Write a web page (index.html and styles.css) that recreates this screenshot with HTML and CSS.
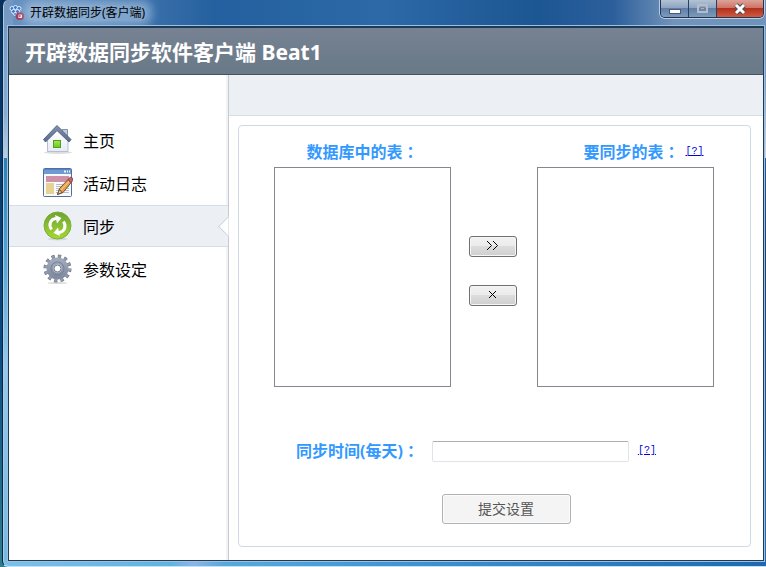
FILE: index.html
```html
<!DOCTYPE html>
<html lang="zh-CN">
<head>
    <meta charset="UTF-8">
    <meta name="viewport" content="width=device-width, initial-scale=1.0">
    <title>开辟数据同步(客户端)</title>
    <link rel="stylesheet" href="styles.css">
</head>
<body>

<div class="window">
    <!-- Title bar -->
    <div class="titlebar">
        <svg class="app-icon" width="16" height="16" viewBox="0 0 16 16">
            <g fill="#3d78c4" stroke="#dcecff" stroke-width="1">
                <circle cx="3" cy="3.500" r="2"/>
                <circle cx="6.500" cy="2.500" r="2"/>
                <circle cx="10" cy="3.500" r="2"/>
                <circle cx="4.500" cy="6.500" r="2"/>
                <circle cx="8.500" cy="6.500" r="2"/>
                <circle cx="6" cy="9" r="1.500"/>
            </g>
            <rect x="8" y="8.500" width="6" height="5.500" rx="2" fill="#fff" stroke="#a03a5c" stroke-width="2"/>
            <path d="M6 11h5M10 9.500l1.500 1.500-1.500 1.500" fill="none" stroke="#a03a5c"/>
        </svg>
        <span class="caption">开辟数据同步(客户端)</span>
        <div class="window-buttons">
            <button type="button" class="win-btn" aria-label="最小化">
                <svg width="13" height="12" viewBox="0 0 13 12"><rect x="1.500" y="6.500" width="11" height="4" fill="#fff" stroke="#4a5a78"/></svg>
            </button>
            <button type="button" class="win-btn" aria-label="最大化" disabled>
                <svg width="13" height="12" viewBox="0 0 13 12"><rect x="2" y="2" width="9" height="7" fill="none" stroke="#b4bdc9" stroke-width="2"/><rect x="4.500" y="4.500" width="4" height="2" fill="#a4b2c4" stroke="#76869d"/></svg>
            </button>
            <button type="button" class="win-btn close" aria-label="关闭">
                <svg width="14" height="12" viewBox="0 0 14 12"><path d="M3 2l8 8M11 2l-8 8" stroke="#4c4a5e" stroke-width="5"/><path d="M3 2l8 8M11 2l-8 8" stroke="#fff" stroke-width="3"/></svg>
            </button>
        </div>
    </div>

    <div class="client">
        <header class="banner">
            <h1>开辟数据同步软件客户端 Beat1</h1>
        </header>

        <div class="content">
            <!-- Side menu -->
            <nav class="sidebar">
                <a href="#home">
                    <svg width="30" height="30" viewBox="0 0 30 30">
                        <defs>
                            <linearGradient id="wall" x1="0" y1="0" x2="0" y2="1"><stop offset="0" stop-color="#fff"/><stop offset="1" stop-color="#e6ebf4"/></linearGradient>
                            <linearGradient id="roof" x1="0" y1="0" x2="0" y2="1"><stop offset="0" stop-color="#8492ad"/><stop offset="1" stop-color="#5a6a88"/></linearGradient>
                            <linearGradient id="door" x1="0" y1="0" x2="0" y2="1"><stop offset="0" stop-color="#a6e84c"/><stop offset="1" stop-color="#5fcf12"/></linearGradient>
                        </defs>
                        <ellipse cx="15" cy="27.500" rx="14" ry="1.500" fill="#ddd"/>
                        <path d="M19 4.500h5.500v8.500l-5.500-4z" fill="#c3ccdb" stroke="#8292b0"/>
                        <path d="M4.500 26.500V15L14.500 5l10.500 10v11.500z" fill="url(#wall)" stroke="#b4bfd2"/>
                        <path d="M.5 14.500L14 .5l14 14-2 2.500L14 5.500 2.500 17z" fill="url(#roof)" stroke="#53648a" stroke-linejoin="round"/>
                        <rect x="10.500" y="15.500" width="7" height="7" fill="url(#door)" stroke="#559a2a"/>
                    </svg>
                    <span>主页</span>
                </a>
                <a href="#log">
                    <svg width="30" height="30" viewBox="0 0 30 30">
                        <rect x=".5" y=".5" width="28" height="28" rx="1" fill="#f8fafd" stroke="#4f6f9f"/>
                        <rect x="1" y="1" width="27" height="5" fill="#6f9ad6"/>
                        <path d="M1 1.500h27" stroke="#5a82c0"/>
                        <path d="M21 3.500h2M24 3.500h1M26 3.500h1" stroke="#e8f1ff" stroke-width="2"/>
                        <rect x="3" y="8" width="23" height="6" fill="#cf91a8"/>
                        <rect x="3" y="15" width="8" height="11" fill="#e8d293"/>
                        <path d="M13 16.500h13M13 18.500h13M13 20.500h13M13 22.500h13M13 24.500h13" stroke="#b7bec9"/>
                        <path d="M14.500 26.500l2-6L26 10.500l3 3-9 11z" fill="#e5a04c" stroke="#80522c"/>
                        <path d="M18 22L27.500 12" stroke="#ffd596"/>
                        <path d="M25 11.500l2.500-2.500q2.500 0 2 3.500l-2 2z" fill="#c9616f" stroke="#8c4b50"/>
                        <path d="M14.500 26.500l2-5 2.500 3z" fill="#f5ddb6" stroke="#6a4a32"/>
                    </svg>
                    <span>活动日志</span>
                </a>
                <a href="#sync" class="active">
                    <svg width="30" height="30" viewBox="0 0 30 30">
                        <defs><linearGradient id="ball" x1="0" y1="0" x2="0" y2="1"><stop offset="0" stop-color="#6ea336"/><stop offset="1" stop-color="#a3d832"/></linearGradient></defs>
                        <ellipse cx="14.500" cy="28" rx="10" ry="1.500" fill="#d5d8dc"/>
                        <circle cx="14.500" cy="14.500" r="13.500" fill="url(#ball)" stroke="#7fae38"/>
                        <path d="M8.500 18.500C5 13 8 8 13 7.500" fill="none" stroke="#fff" stroke-width="3"/>
                        <path d="M12 4l6.500 3-4.500 5.500z" fill="#fff"/>
                        <path d="M20.500 10.500C24 16 21 21 16 21.500" fill="none" stroke="#fff" stroke-width="3"/>
                        <path d="M17 25l-6.500-3 4.500-5.500z" fill="#fff"/>
                    </svg>
                    <span>同步</span>
                </a>
                <a href="#settings">
                    <svg width="30" height="30" viewBox="0 0 30 30">
                        <defs>
                            <linearGradient id="gear" x1="0" y1="0" x2="0" y2="1"><stop offset="0" stop-color="#a0a9ba"/><stop offset="1" stop-color="#828c9f"/></linearGradient>
                        </defs>
                        <ellipse cx="14.500" cy="29" rx="10" ry="1" fill="#ddd"/>
                        <circle cx="14.500" cy="14.500" r="12" fill="none" stroke="#6c768a" stroke-width="4" stroke-dasharray="3.200 3.083"/>
                        <circle cx="14.500" cy="14.500" r="7.500" fill="none" stroke="url(#gear)" stroke-width="7"/>
                        <circle cx="14.500" cy="14.500" r="12" fill="none" stroke="#929cae" stroke-width="3" stroke-dasharray="2.200 4.083" stroke-dashoffset="-0.500"/>
                        <circle cx="14.500" cy="14.500" r="6.500" fill="none" stroke="#76819a"/>
                        <circle cx="14.500" cy="14.500" r="3.500" fill="#fff" stroke="#68758f"/>
                    </svg>
                    <span>参数设定</span>
                </a>
            </nav>

            <main class="main">
                <div class="toolbar"></div>
                <form class="panel">
                    <div class="tables">
                        <div class="table-list">
                            <div class="heading"><label for="sourceTables">数据库中的表<span class="colon" lang="zh-Hant">：</span></label></div>
                            <select id="sourceTables" size="10" multiple></select>
                        </div>
                        <div class="move-buttons">
                            <button type="button" class="small-btn" aria-label="添加">
                                <svg width="11" height="9" viewBox="0 0 11 9"><path d="M0 0l4.500 4.500L0 9M6 0l4.500 4.500L6 9"/></svg>
                            </button>
                            <button type="button" class="small-btn" aria-label="移除">
                                <svg width="7" height="7" viewBox="0 0 7 7"><path d="M0 0l7 7M7 0L0 7"/></svg>
                            </button>
                        </div>
                        <div class="table-list">
                            <div class="heading with-help"><label for="syncTables">要同步的表<span class="colon" lang="zh-Hant">：</span></label><a class="help" href="#help-tables">[?]</a></div>
                            <select id="syncTables" size="10" multiple></select>
                        </div>
                    </div>

                    <div class="time-row">
                        <label for="syncTime">同步时间(每天)<span class="colon" lang="zh-Hant">：</span></label>
                        <input type="text" id="syncTime">
                        <a class="help" href="#help-time">[?]</a>
                    </div>

                    <button type="button" class="submit">提交设置</button>
                </form>
            </main>
        </div>
    </div>
</div>

</body>
</html>
```

FILE: styles.css
```css
* { box-sizing: border-box; }
body { margin: 0; height: 100vh; padding-left: 2px; background: linear-gradient(#08305c, #0b4a80 60%, #2d7f8c); font-family: "Noto Sans", "Noto Sans CJK SC", sans-serif; color: #000; }
button, input, select { font-family: inherit; margin: 0; }

/* Window frame: bottom edge, left edge, right edge, then the title bar glass */
.window {
    height: 100%; display: flex; flex-direction: column; padding: 0 2px 5px 5px;
    border-left: 1px solid #0c2745; border-bottom: 1px solid #bfe4f8; border-radius: 6px 0 0 6px; box-shadow: inset 1px 0 #a9cdea;
    background:
        linear-gradient(90deg, #7cc0e8, #62b2de 22%, #8fb4e4 25%, #57a9dc 29%, #3b8ccc 60%, #1f68b0) bottom / 100% 6px no-repeat,
        linear-gradient(#7296bf, #86abd4 20%, #b9cfe3 28%, #2a7fb6 28%, #4fa5d4 45%, #93cbee 65%, #74b8e0) left / 10px 100% no-repeat,
        linear-gradient(#6f93bb, #7e9bc4 14%, #cfd9e8 28%, #1f5d9e 28%, #11427c 45%, #2a70b4) right / 4px 100% no-repeat,
        linear-gradient(90deg, #6a94c2, #24609f 28%, #2c69a6 50%, #1c5693 70%, #2c5f9c 80%, #7394ba 88%, #6f93bb);
}
.titlebar { height: 26px; display: flex; align-items: center; flex: none; }
.app-icon { margin-left: 1px; }
.caption { font-size: 12px; line-height: 16px; margin-left: 3px; padding: 0 2px; background: rgba(190, 212, 236, 0.5); box-shadow: 0 0 8px 5px rgba(190, 212, 236, 0.5); border-radius: 6px; }
.window-buttons { display: flex; align-self: flex-start; margin-left: auto; border: 1px solid #25354f; border-top: 0; border-radius: 0 0 5px 5px; box-shadow: 0 0 0 1px rgba(220, 235, 250, 0.7); overflow: hidden; }
.win-btn { width: 28px; height: 17px; padding: 0; display: flex; justify-content: center; align-items: center; border: 0; border-right: 1px solid #2c3f5e; background: linear-gradient(#b3c2d5, #8ea5c0 45%, #5f7fa6 50%, #7d9bbe); }
.win-btn.close { width: 46px; border-right: 0; background: linear-gradient(#dca299, #cf7466 45%, #b3301d 50%, #cf5c41); }

.client { flex: 1; display: flex; flex-direction: column; min-height: 0; border: 1px solid #1d3a57; border-top-width: 2px; box-shadow: 0 0 0 1px #9cc0de; background: #fff; }
.banner { height: 47px; flex: none; display: flex; align-items: center; padding: 2px 0 0 16px; background: linear-gradient(#778293, #687987); border-bottom: 1px solid #465361; }
.banner h1 { margin: 0; font-size: 21px; line-height: 28px; font-weight: bold; color: #fff; }
.content { flex: 1; display: flex; min-height: 0; }

/* Side menu */
.sidebar { width: 220px; flex: none; padding-top: 44px; border-right: 1px solid #c5cad3; box-shadow: inset -2px 0 #f3f3f5; }
.sidebar a { position: relative; height: 42px; margin-bottom: 1px; padding-left: 34px; display: flex; align-items: center; gap: 10px; font-size: 16px; color: #000; text-decoration: none; border: solid transparent; border-width: 1px 0; }
.sidebar a.active { background: #eceff4; border-color: #d5dde7; }
/* Notch that points at the open page */
.sidebar a.active::after { content: ""; position: absolute; right: -8px; top: 13px; width: 14px; height: 14px; background: #fff; border: solid #c5cad3; border-width: 0 0 1px 1px; transform: rotate(45deg); clip-path: polygon(0 0, 100% 100%, 0 100%); }

/* Main area */
.main { flex: 1; display: flex; flex-direction: column; min-width: 0; }
.toolbar { height: 41px; flex: none; background: #eceff4; border-bottom: 1px solid #d5dde7; }
.panel { flex: 1; display: flex; flex-direction: column; align-items: center; margin: 9px 12px 13px 9px; padding: 14px 1px 0 0; border: 1px solid #d0dae4; border-radius: 4px; }
.tables { display: flex; }
.table-list { width: 177px; }
.heading { height: 27px; display: flex; justify-content: center; align-items: center; padding-bottom: 4px; }
.heading.with-help { padding-left: 36px; gap: 6px; }
label { font-size: 16px; line-height: 24px; font-weight: bold; color: #3399ff; white-space: nowrap; }
.colon { font-family: "Noto Sans CJK TC", sans-serif; }
.help { font-family: "Liberation Mono", monospace; font-size: 10px; line-height: 14px; color: #0000dd; }
select { display: block; width: 100%; height: 220px; border: 1px solid #828790; border-radius: 0; background: #fff; }
.move-buttons { width: 86px; display: flex; flex-direction: column; align-items: center; gap: 28px; padding: 96px 2px 0 0; }
.small-btn { width: 48px; height: 21px; padding: 0 2px 2px 0; display: flex; justify-content: center; align-items: center; border: 1px solid #707070; border-radius: 3px; box-shadow: inset 0 0 0 1px #f6f6f6; background: linear-gradient(#f2f2f2, #ebebeb 48%, #dddddd 50%, #cfcfcf); }
.small-btn path { fill: none; stroke: #000; }

.time-row { display: flex; align-items: center; height: 24px; margin: 52px 0 0 -36px; }
.time-row label { padding-bottom: 2px; }
.time-row input { width: 197px; height: 21px; margin: 0 9px 0 13px; border: 1px solid #e2e3ea; border-top-color: #abadb3; border-radius: 2px; background: #fff; }
.submit { width: 129px; height: 30px; margin: 31px 0 0 24px; padding: 0 0 2px; border: 1px solid #adb2b5; border-radius: 3px; box-shadow: inset 0 0 0 1px #fcfcfc; background: #f4f4f4; font-size: 14px; color: #555; }
```
